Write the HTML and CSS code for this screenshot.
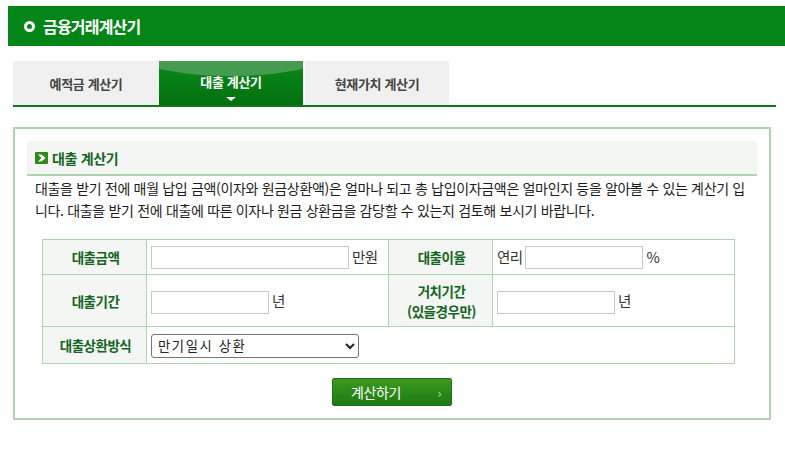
FILE: index.html
```html
<!DOCTYPE html>
<html lang="ko">
<head>
<meta charset="utf-8">
<title>금융거래계산기</title>
<link rel="stylesheet" href="styles.css">
</head>
<body>
<h1 class="page-title"><span class="ring"></span>금융거래계산기</h1>
<div class="content">
  <ul class="tabs">
    <li class="tab">예적금 계산기</li>
    <li class="tab active"><span class="arc"></span><span class="tab-label">대출 계산기</span><span class="caret"></span></li>
    <li class="tab wide">현재가치 계산기</li>
  </ul>
  <section class="box">
    <h2 class="box-title"><svg class="bullet" width="13" height="12" viewBox="0 0 13 12"><rect width="13" height="12" rx="1" fill="#2f8a1a"/><path d="M3 2.5 H6.5 L10.5 6 L6.5 9.5 H3 L6.5 6 Z" fill="#fff"/></svg>대출 계산기</h2>
    <p class="desc">대출을 받기 전에 매월 납입 금액(이자와 원금상환액)은 얼마나 되고 총 납입이자금액은 얼마인지 등을 알아볼 수 있는 계산기 입니다. 대출을 받기 전에 대출에 따른 이자나 원금 상환금을 감당할 수 있는지 검토해 보시기 바랍니다.</p>
    <table class="form">
      <colgroup><col class="c1"><col class="c2"><col class="c3"><col class="c4"></colgroup>
      <tr class="r1">
        <th>대출금액</th>
        <td><input class="in in-long" type="text"> 만원</td>
        <th>대출이율</th>
        <td>연리 <input class="in in-rate" type="text"> %</td>
      </tr>
      <tr class="r2">
        <th>대출기간</th>
        <td><input class="in in-short" type="text"> 년</td>
        <th>거치기간<br>(있을경우만)</th>
        <td><input class="in in-short" type="text"> 년</td>
      </tr>
      <tr class="r3">
        <th>대출상환방식</th>
        <td colspan="3"><select class="sel"><option>만기일시 상환</option></select></td>
      </tr>
    </table>
    <div class="actions"><button class="calc" type="button"><span>계산하기</span><span class="chev">›</span></button></div>
  </section>
</div>
</body>
</html>
```
FILE: styles.css
```css
* { box-sizing: border-box; }
html, body { margin: 0; padding: 0; }
body {
  background: #fff;
  padding: 6px 0 0 8px;
  font-family: "Noto Sans CJK KR", "Noto Sans", sans-serif;
  font-size: 14px;
  color: #222;
  overflow: hidden;
}
.page-title {
  margin: 0;
  height: 40px;
  background: #048517;
  color: #fff;
  font-size: 16px;
  font-weight: 700;
  letter-spacing: -0.8px;
  display: flex;
  align-items: center;
  padding-left: 16px;
}
.ring {
  width: 11px;
  height: 11px;
  border: 3px solid #fff;
  border-radius: 50%;
  margin-right: 8px;
}
.content { padding: 15px 0 0 5px; width: 768px; }
.tabs {
  list-style: none;
  margin: 0;
  padding: 0;
  display: flex;
  border-bottom: 2px solid #0c7a1c;
  height: 46px;
}
.tab {
  width: 146px;
  height: 44px;
  background: #f0f0f0;
  color: #444;
  font-size: 13px;
  font-weight: 700;
  letter-spacing: -0.35px;
  display: flex;
  align-items: center;
  justify-content: center;
  position: relative;
}
.tab.active {
  width: 144px;
  background: linear-gradient(#0a8a1a, #03700f);
  color: #fff;
  flex-direction: column;
  overflow: hidden;
}
.tab.wide { width: 146px; border-left: 2px solid #fff; }
.arc {
  position: absolute;
  left: -40px;
  right: -40px;
  top: -46px;
  height: 61px;
  background: #459c50;
  border-radius: 50%;
}
.tab-label { position: relative; margin-top: -2px; line-height: 18px; }
.caret {
  position: absolute;
  left: 67px;
  bottom: 4px;
  width: 0;
  height: 0;
  border-left: 5px solid transparent;
  border-right: 5px solid transparent;
  border-top: 4px solid #fff;
}
.box {
  margin-top: 20px;
  width: 758px;
  height: 293px;
  border: 2px solid #aed4b0;
  padding: 12px;
}
.box-title {
  margin: 0;
  height: 35px;
  background: #f4f6f4;
  border-bottom: 2px solid #aed4b0;
  color: #14641f;
  font-size: 14px;
  font-weight: 700;
  letter-spacing: -0.35px;
  display: flex;
  align-items: center;
  padding-left: 8px;
}
.bullet { margin-right: 4px; }
.desc {
  margin: 1px 0 0;
  padding: 0 8px;
  font-size: 14px;
  line-height: 22px;
  letter-spacing: -0.33px;
  color: #1c1c1c;
}
.form {
  border-collapse: collapse;
  table-layout: fixed;
  width: 692px;
  margin: 18px 0 0 15px;
}
.c1, .c3 { width: 104px; }
.c2 { width: 242px; }
.c4 { width: 242px; }
.form th, .form td { border: 1px solid #aed4b0; padding: 0 4px; font-size: 14.5px; }
.form th {
  background: #f3f6f3;
  color: #14641f;
  font-size: 13.5px;
  font-weight: 700;
  line-height: 20px;
  letter-spacing: -0.5px;
  padding: 0 3px 0 5px;
}
.form td { color: #333; white-space: nowrap; letter-spacing: -0.6px; word-spacing: -0.5px; }
.r1 { height: 35px; }
.r2 { height: 52px; }
.r3 { height: 37px; }
.form .r1 td { padding-top: 4px; line-height: 20px; }
.form .r2 td { padding-top: 3px; }
.in {
  height: 23px;
  border: 1px solid #c8c8c8;
  background: #fff;
  padding: 0 4px;
  vertical-align: middle;
  margin: 0;
}
.r1 .in { margin-bottom: 3px; }
.in-long { width: 198px; }
.in-short { width: 118px; }
.in-rate { width: 118px; }
.sel {
  width: 208px;
  height: 24px;
  padding-left: 2px;
  font-family: "Noto Sans CJK KR", sans-serif;
  font-size: 13.3px;
  letter-spacing: 1.6px;
  color: #222;
  background: #fff;
  border: 1px solid #767676;
  border-radius: 3px;
  vertical-align: middle;
}
.actions { display: flex; justify-content: center; margin-top: 14px; }
.calc {
  width: 120px;
  height: 28px;
  border: 1px solid #22701a;
  border-radius: 2px;
  background: linear-gradient(#3c9a20, #1c7a12);
  color: #fff;
  font-family: "Noto Sans CJK KR", sans-serif;
  font-size: 14px;
  letter-spacing: -0.4px;
  display: flex;
  align-items: center;
  padding: 0 10px 0 18px;
  justify-content: space-between;
}
.chev { font-size: 12px; color: #cfe8c8; }
```
